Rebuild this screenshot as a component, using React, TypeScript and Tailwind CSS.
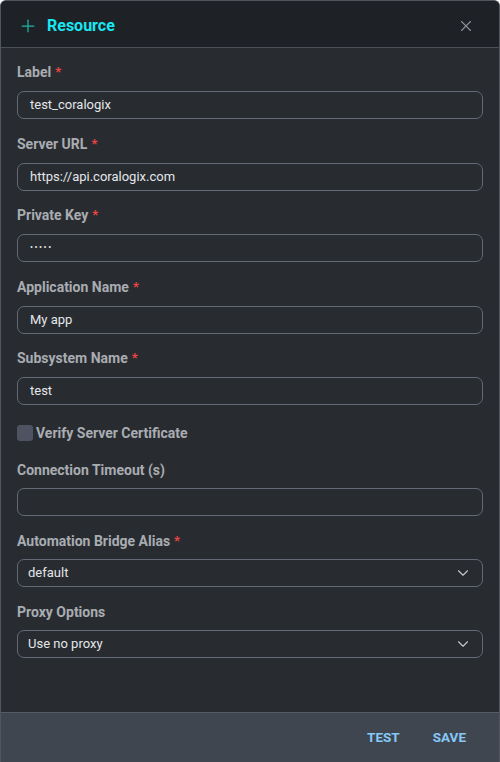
import { X, ChevronDown, Plus } from 'lucide-react';

const fields = [
  { label: 'Label', value: 'test_coralogix', required: true },
  { label: 'Server URL', value: 'https://api.coralogix.com', required: true },
  { label: 'Private Key', value: '•••••', required: true, secret: true },
  { label: 'Application Name', value: 'My app', required: true },
  { label: 'Subsystem Name', value: 'test', required: true },
];

function FieldLabel({ text, required, tight }: { text: string; required?: boolean; tight?: boolean }) {
  return (
    <div className={`h-5 leading-5 text-[14px] font-bold text-[#a9acb1] ${tight ? 'mb-[8px]' : 'mb-[9px]'}`}>
      {text}
      {required && <span className="text-[#ef4444] text-[13px] ml-[4px] relative -top-[1px]">*</span>}
    </div>
  );
}

function TextBox({ value, secret }: { value: string; secret?: boolean }) {
  return (
    <div className="h-7 border border-[#646a75] rounded-[7px] px-3 flex items-center text-[13px] text-[#e4e6e9]">
      <span className={secret ? 'text-[9px] tracking-[1.5px]' : ''}>{value}</span>
    </div>
  );
}

function SelectBox({ value }: { value: string }) {
  return (
    <div className="h-7 border border-[#646a75] rounded-[7px] pl-[10px] pr-[10px] flex items-center justify-between text-[13px] text-[#e4e6e9]">
      <span>{value}</span>
      <ChevronDown className="w-[18px] h-[18px] text-[#c3c6cb]" strokeWidth={1.5} />
    </div>
  );
}

export default function App() {
  return (
    <div
      className="w-[500px] h-[762px] flex flex-col bg-[#282c31] border border-b-0 border-[#50555e] rounded-t-[6px] overflow-hidden"
      style={{ fontFamily: 'Roboto, "Liberation Sans", sans-serif' }}
    >
      {/* Header */}
      <div className="h-[47px] shrink-0 bg-[#1e2125] border-b border-[#4b5058] flex items-center justify-between pt-[3px] pl-[17px] pr-[24px]">
        <div className="flex items-center gap-[9px]">
          <Plus className="w-[20px] h-[20px] text-[#1fb3a6]" strokeWidth={1.5} />
          <span className="text-[16px] font-bold text-[#19e6f0]">Resource</span>
        </div>
        <X className="w-[18px] h-[18px] text-[#8d9198]" strokeWidth={1.5} />
      </div>

      {/* Body */}
      <div className="flex-1 px-4 pt-[14px] flex flex-col">
        <div className="flex flex-col gap-[14.5px]">
          {fields.map((f) => (
            <div key={f.label}>
              <FieldLabel text={f.label} required={f.required} />
              <TextBox value={f.value} secret={f.secret} />
            </div>
          ))}
        </div>

        <div className="mt-[18px] flex items-center h-5 gap-[3px]">
          <div className="w-4 h-4 rounded-[3px] bg-[#4d5361]" />
          <span className="text-[14px] font-bold text-[#a9acb1]">Verify Server Certificate</span>
        </div>

        <div className="mt-[17px]">
          <FieldLabel text="Connection Timeout (s)" tight />
          <TextBox value="" />
        </div>

        <div className="mt-[15px]">
          <FieldLabel text="Automation Bridge Alias" required tight />
          <SelectBox value="default" />
        </div>

        <div className="mt-[15px]">
          <FieldLabel text="Proxy Options" tight />
          <SelectBox value="Use no proxy" />
        </div>
      </div>

      {/* Footer */}
      <div className="h-[50px] shrink-0 bg-[#3f4650] border-t border-[#565c66] flex items-center justify-end gap-[1px] pr-[17px]">
        <button className="px-4 h-9 text-[13.5px] font-bold text-[#86c8f7] uppercase">Test</button>
        <button className="px-4 h-9 text-[13.5px] font-bold text-[#86c8f7] uppercase">Save</button>
      </div>
    </div>
  );
}
